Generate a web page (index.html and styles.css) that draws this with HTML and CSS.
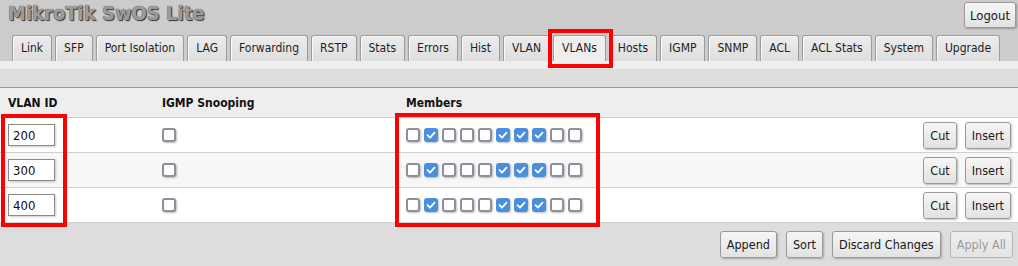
FILE: index.html
```html
<!DOCTYPE html>
<html>
<head>
<meta charset="utf-8">
<title>MikroTik SwOS Lite</title>
<link rel="stylesheet" href="styles.css">
</head>
<body>
<div class="page">
  <header class="top">
    <h1 class="brand">MikroTik SwOS Lite</h1>
    <button class="btn logout">Logout</button>
  </header>
  <nav class="tabs">
    <a class="tab">Link</a>
    <a class="tab">SFP</a>
    <a class="tab">Port Isolation</a>
    <a class="tab">LAG</a>
    <a class="tab">Forwarding</a>
    <a class="tab">RSTP</a>
    <a class="tab">Stats</a>
    <a class="tab">Errors</a>
    <a class="tab">Hist</a>
    <a class="tab">VLAN</a>
    <a class="tab active">VLANs</a>
    <a class="tab">Hosts</a>
    <a class="tab">IGMP</a>
    <a class="tab">SNMP</a>
    <a class="tab">ACL</a>
    <a class="tab">ACL Stats</a>
    <a class="tab">System</a>
    <a class="tab">Upgrade</a>
  </nav>
  <div class="band"></div>
  <div class="toolbar"></div>
  <div class="grid">
    <div class="row head">
      <div class="cell">VLAN ID</div>
      <div class="cell">IGMP Snooping</div>
      <div class="cell">Members</div>
      <div class="cell"></div>
    </div>
    <div class="row">
      <div class="cell"><input class="vid" type="text" value="200"></div>
      <div class="cell"><span class="cb"></span></div>
      <div class="cell members">
        <span class="cb"></span><span class="cb on"><svg viewBox="0 0 14 14"><path d="M3.5 7.2 L6 9.6 L10.5 4.6"/></svg></span><span class="cb"></span><span class="cb"></span><span class="cb"></span><span class="cb on"><svg viewBox="0 0 14 14"><path d="M3.5 7.2 L6 9.6 L10.5 4.6"/></svg></span><span class="cb on"><svg viewBox="0 0 14 14"><path d="M3.5 7.2 L6 9.6 L10.5 4.6"/></svg></span><span class="cb on"><svg viewBox="0 0 14 14"><path d="M3.5 7.2 L6 9.6 L10.5 4.6"/></svg></span><span class="cb"></span><span class="cb"></span>
      </div>
      <div class="cell actions"><button class="btn">Cut</button><button class="btn">Insert</button></div>
    </div>
    <div class="row alt">
      <div class="cell"><input class="vid" type="text" value="300"></div>
      <div class="cell"><span class="cb"></span></div>
      <div class="cell members">
        <span class="cb"></span><span class="cb on"><svg viewBox="0 0 14 14"><path d="M3.5 7.2 L6 9.6 L10.5 4.6"/></svg></span><span class="cb"></span><span class="cb"></span><span class="cb"></span><span class="cb on"><svg viewBox="0 0 14 14"><path d="M3.5 7.2 L6 9.6 L10.5 4.6"/></svg></span><span class="cb on"><svg viewBox="0 0 14 14"><path d="M3.5 7.2 L6 9.6 L10.5 4.6"/></svg></span><span class="cb on"><svg viewBox="0 0 14 14"><path d="M3.5 7.2 L6 9.6 L10.5 4.6"/></svg></span><span class="cb"></span><span class="cb"></span>
      </div>
      <div class="cell actions"><button class="btn">Cut</button><button class="btn">Insert</button></div>
    </div>
    <div class="row">
      <div class="cell"><input class="vid" type="text" value="400"></div>
      <div class="cell"><span class="cb"></span></div>
      <div class="cell members">
        <span class="cb"></span><span class="cb on"><svg viewBox="0 0 14 14"><path d="M3.5 7.2 L6 9.6 L10.5 4.6"/></svg></span><span class="cb"></span><span class="cb"></span><span class="cb"></span><span class="cb on"><svg viewBox="0 0 14 14"><path d="M3.5 7.2 L6 9.6 L10.5 4.6"/></svg></span><span class="cb on"><svg viewBox="0 0 14 14"><path d="M3.5 7.2 L6 9.6 L10.5 4.6"/></svg></span><span class="cb on"><svg viewBox="0 0 14 14"><path d="M3.5 7.2 L6 9.6 L10.5 4.6"/></svg></span><span class="cb"></span><span class="cb"></span>
      </div>
      <div class="cell actions"><button class="btn">Cut</button><button class="btn">Insert</button></div>
    </div>
  </div>
  <footer class="footer">
    <button class="btn">Append</button>
    <button class="btn">Sort</button>
    <button class="btn">Discard Changes</button>
    <button class="btn disabled">Apply All</button>
  </footer>
  <div class="mark mark-tab"></div>
  <div class="mark mark-ids"></div>
  <div class="mark mark-members"></div>
</div>
</body>
</html>
```
FILE: styles.css
```css
html, body {
  margin: 0;
  padding: 0;
  background: #cccccc;
}
body {
  font-family: "DejaVu Sans Condensed", "DejaVu Sans", sans-serif;
  font-stretch: condensed;
  font-size: 12px;
  color: #111;
}
.page {
  position: relative;
  width: 1018px;
  height: 266px;
  overflow: hidden;
}
.top {
  height: 35px;
  display: flex;
  justify-content: space-between;
  align-items: flex-start;
  padding: 0 2px 0 8px;
  box-sizing: border-box;
}
.brand {
  margin: 0;
  padding-top: 1px;
  font-size: 20px;
  font-weight: bold;
  line-height: 24px;
  color: #9c9c9c;
  text-shadow: 1px 1px 1px #333, 0 0 1px #444;
}
.btn {
  font-family: inherit;
  font-stretch: condensed;
  font-size: 12.5px;
  color: #1a1a1a;
  height: 27px;
  padding: 0 6px;
  border: 1px solid #9a9a9a;
  border-radius: 3px;
  background: linear-gradient(#f6f6f6, #e2e2e2);
  box-shadow: 1px 1px 2px rgba(0,0,0,0.25);
  cursor: pointer;
}
.btn.disabled {
  color: #9a9a9a;
  border-color: #b4b4b4;
  box-shadow: none;
  background: linear-gradient(#eeeeee, #e4e4e4);
}
.logout {
  margin-top: 2px;
  height: 26px;
  padding: 0 5px;
  font-size: 13px;
}
.tabs {
  display: flex;
  gap: 3px;
  padding-left: 12px;
  height: 26px;
  align-items: flex-end;
}
.tab {
  height: 25px;
  line-height: 25px;
  padding: 0 8px;
  border: 1px solid #9c9c9c;
  border-bottom: none;
  border-radius: 3px 3px 0 0;
  background: linear-gradient(#ececec, #dedede);
  box-shadow: inset 1px 1px 0 #fafafa;
  color: #1e1e1e;
  font-size: 12px;
  white-space: nowrap;
}
.tab.active {
  background: #eeeeee;
}
.band {
  height: 8px;
  background: #eeeeee;
}
.toolbar {
  height: 18px;
  background: #dddddd;
  border-bottom: 1px solid #9a9a9a;
}
.grid {
  background: #ffffff;
}
.row {
  display: grid;
  grid-template-columns: 154px 244px 1fr auto;
  align-items: center;
  height: 34px;
  border-bottom: 1px solid #d0d0d0;
}
.row.alt {
  background: #f7f7f7;
}
.row.head {
  height: 29px;
  background: #eeeeee;
  font-weight: bold;
  font-size: 12px;
  color: #111;
}
.cell {
  padding-left: 8px;
}
.vid {
  width: 47px;
  height: 22px;
  box-sizing: border-box;
  border: 1px solid #8a8a8a;
  padding: 0 4px;
  font-family: inherit;
  font-stretch: condensed;
  font-size: 13px;
  color: #111;
  background: #fff;
  box-shadow: 1px 1px 2px rgba(0,0,0,0.2);
  display: block;
}
.cb {
  display: inline-block;
  width: 14px;
  height: 14px;
  box-sizing: border-box;
  border: 2px solid #8e8e9c;
  border-radius: 3px;
  background: #fff;
  box-shadow: 1px 1px 2px rgba(0,0,0,0.25);
  vertical-align: middle;
}
.cb.on {
  background: #4a8fdb;
  border-color: #4a8fdb;
  position: relative;
}
.cb svg {
  display: block;
  width: 14px;
  height: 14px;
  margin: -2px;
}
.cb svg path {
  fill: none;
  stroke: #fff;
  stroke-width: 1.8;
  stroke-linecap: round;
  stroke-linejoin: round;
}
.members {
  display: flex;
  gap: 4px;
  align-items: center;
}
.actions {
  display: flex;
  gap: 8px;
  padding-right: 7px;
}
.footer {
  height: 44px;
  background: #dddddd;
  display: flex;
  justify-content: flex-end;
  align-items: flex-start;
  gap: 9px;
  padding: 8px 5px 0 0;
  box-sizing: border-box;
}
.mark {
  position: absolute;
  border: 4px solid #ff0000;
  box-sizing: border-box;
  pointer-events: none;
}
.mark-tab {
  left: 548px;
  top: 29px;
  width: 65px;
  height: 39px;
}
.mark-ids {
  left: 1px;
  top: 114px;
  width: 66px;
  height: 113px;
}
.mark-members {
  left: 395px;
  top: 113px;
  width: 205px;
  height: 114px;
}
```
